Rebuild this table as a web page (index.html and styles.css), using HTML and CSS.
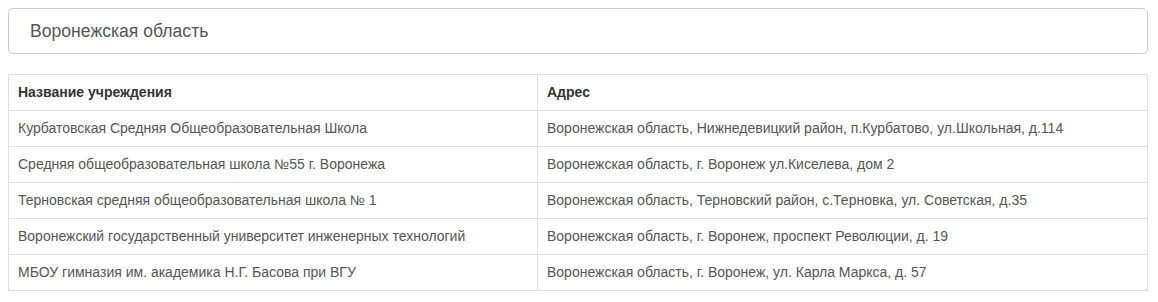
FILE: index.html
```html
<!DOCTYPE html>
<html lang="ru">
<head>
<meta charset="utf-8">
<title>Воронежская область</title>
<link rel="stylesheet" href="styles.css">
</head>
<body>
<div class="region">Воронежская область</div>
<table class="schools">
  <thead>
    <tr><th class="col-name">Название учреждения</th><th>Адрес</th></tr>
  </thead>
  <tbody>
    <tr><td>Курбатовская Средняя Общеобразовательная Школа</td><td>Воронежская область, Нижнедевицкий район, п.Курбатово, ул.Школьная, д.114</td></tr>
    <tr><td>Средняя общеобразовательная школа №55 г. Воронежа</td><td>Воронежская область, г. Воронеж ул.Киселева, дом 2</td></tr>
    <tr><td>Терновская средняя общеобразовательная школа № 1</td><td>Воронежская область, Терновский район, с.Терновка, ул. Советская, д.35</td></tr>
    <tr><td>Воронежский государственный университет инженерных технологий</td><td>Воронежская область, г. Воронеж, проспект Революции, д. 19</td></tr>
    <tr><td>МБОУ гимназия им. академика Н.Г. Басова при ВГУ</td><td>Воронежская область, г. Воронеж, ул. Карла Маркса, д. 57</td></tr>
  </tbody>
</table>
</body>
</html>
```
FILE: styles.css
```css
html, body {
  margin: 0;
  padding: 0;
  background: #fff;
}
body {
  padding: 8px 10px 0 8px;
  font-family: "Liberation Sans", Arial, sans-serif;
  color: #333;
}
.region {
  box-sizing: border-box;
  height: 46px;
  border: 1px solid #ccc;
  border-radius: 5px;
  padding: 0 21px;
  font-size: 17.6px;
  line-height: 44px;
  color: #555;
}
.schools {
  width: 100%;
  margin-top: 20px;
  border-collapse: collapse;
  font-size: 14px;
  line-height: 19px;
}
.schools th, .schools td {
  border: 1px solid #ddd;
  padding: 8px 8px 8px 9px;
  text-align: left;
  vertical-align: top;
}
.schools th {
  font-weight: bold;
  color: #333;
}
.schools td {
  color: #555;
}
.col-name {
  width: 511px;
}
```
